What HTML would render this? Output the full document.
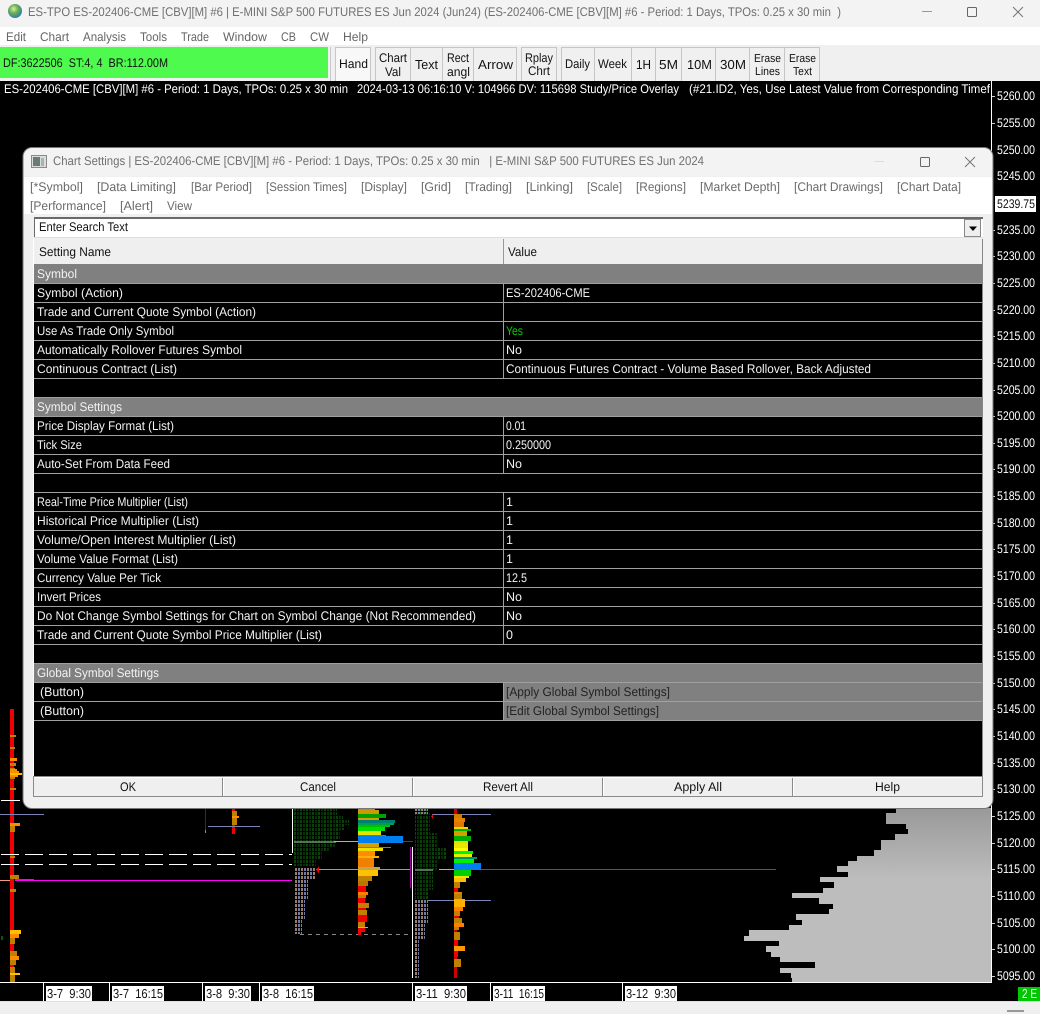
<!DOCTYPE html>
<html><head><meta charset="utf-8"><title>Chart Settings</title>
<style>
html,body{margin:0;padding:0;background:#000;width:1040px;height:1014px;overflow:hidden}
svg{display:block;position:absolute;left:0;top:0}
text{font-family:"Liberation Sans",sans-serif;font-size:12.5px;white-space:pre;text-rendering:geometricPrecision}
.c rect,.c line{shape-rendering:crispEdges}
.k{fill:#111}.w{fill:#f2f2f2}.g{fill:#707070}.t{fill:#6a6a6a}.d{fill:#222}.a{fill:#fff}
.dt text{font-size:13px}
</style></head><body>
<svg width="1040" height="1014" viewBox="0 0 1040 1014">
<defs>
<pattern id="pg" width="6" height="4" patternUnits="userSpaceOnUse" x="294" y="808"><rect x="0" y="0" width="2" height="3" fill="#0a420a"/><rect x="3" y="0" width="2" height="3" fill="#062e06"/></pattern>
<pattern id="pc" width="6" height="4" patternUnits="userSpaceOnUse" x="295" y="868"><rect x="0" y="0" width="2" height="3" fill="#9a7f68"/><rect x="3" y="0" width="2" height="3" fill="#7078a4"/></pattern>
<pattern id="pg2" width="6" height="4" patternUnits="userSpaceOnUse" x="414" y="808"><rect x="0" y="0" width="2" height="3" fill="#0a420a"/><rect x="3" y="0" width="2" height="3" fill="#062e06"/></pattern>
<pattern id="pc2" width="6" height="4" patternUnits="userSpaceOnUse" x="415" y="900"><rect x="0" y="0" width="2" height="3" fill="#9a7f68"/><rect x="3" y="0" width="2" height="3" fill="#7078a4"/></pattern>
<linearGradient id="gp" x1="0" y1="808" x2="0" y2="880" gradientUnits="userSpaceOnUse"><stop offset="0" stop-color="#999"/><stop offset="1" stop-color="#bdbdbd"/></linearGradient>
<radialGradient id="gl" cx=".4" cy=".35" r=".7"><stop offset="0" stop-color="#d4f0a0"/><stop offset=".45" stop-color="#6aae55"/><stop offset="1" stop-color="#2a78b0"/></radialGradient>
</defs>
<g class="c">
<rect width="1040" height="1014" fill="#000"/>
<rect width="1040" height="27" fill="#f3f3f3"/>
<rect y="27" width="1040" height="18" fill="#fff"/>
<rect y="45" width="1040" height="36" fill="#f0f0f0"/>
<rect x="0" y="47" width="328" height="31" fill="#4dfa4d"/>
<rect x="330" y="47" width="1" height="34" fill="#c8c8c8"/>
<g fill="#f0f0f0" stroke="#c6c6c6" stroke-width="1">
<rect x="335.500" y="47.500" width="35" height="34" fill="#f8f8f8"/>
<rect x="375.500" y="47.500" width="35" height="34"/><rect x="410.500" y="47.500" width="32" height="34"/>
<rect x="442.500" y="47.500" width="31" height="34"/><rect x="473.500" y="47.500" width="43" height="34"/>
<rect x="521.500" y="47.500" width="35" height="34"/><rect x="561.500" y="47.500" width="33" height="34"/>
<rect x="594.500" y="47.500" width="37" height="34"/><rect x="631.500" y="47.500" width="24" height="34"/>
<rect x="655.500" y="47.500" width="26" height="34"/><rect x="681.500" y="47.500" width="34" height="34"/>
<rect x="715.500" y="47.500" width="34" height="34"/><rect x="749.500" y="47.500" width="35" height="34"/>
<rect x="784.500" y="47.500" width="35" height="34"/>
</g>
<rect y="81" width="1040" height="1" fill="#000"/>
</g>
<circle cx="15" cy="11" r="7" fill="url(#gl)"/>
<g class="g"><text x="28" y="16" textLength="813" lengthAdjust="spacingAndGlyphs">ES-TPO ES-202406-CME [CBV][M] #6 | E-MINI S&amp;P 500 FUTURES ES Jun 2024 (Jun24) (ES-202406-CME [CBV][M] #6 - Period: 1 Days, TPOs: 0.25 x 30 min  )</text></g>
<g fill="none" stroke="#666"><path d="M922 11.500H932" stroke="#999"/><rect x="967.500" y="7.500" width="9" height="9" rx="1"/><path d="M1013 7L1023 17M1023 7L1013 17" stroke="#777"/></g>
<g class="t" style="fill:#666">
<text x="6" y="41" textLength="20" lengthAdjust="spacingAndGlyphs">Edit</text><text x="40" y="41" textLength="29" lengthAdjust="spacingAndGlyphs">Chart</text><text x="83" y="41" textLength="43" lengthAdjust="spacingAndGlyphs">Analysis</text><text x="140" y="41" textLength="27" lengthAdjust="spacingAndGlyphs">Tools</text><text x="181" y="41" textLength="28" lengthAdjust="spacingAndGlyphs">Trade</text><text x="223" y="41" textLength="44" lengthAdjust="spacingAndGlyphs">Window</text><text x="281" y="41" textLength="15" lengthAdjust="spacingAndGlyphs">CB</text><text x="310" y="41" textLength="19" lengthAdjust="spacingAndGlyphs">CW</text><text x="343" y="41" textLength="25" lengthAdjust="spacingAndGlyphs">Help</text>
</g>
<text class="k" x="3" y="67" textLength="165" lengthAdjust="spacingAndGlyphs">DF:3622506  ST:4, 4  BR:112.00M</text>
<g class="k">
<text x="339" y="68" textLength="29" lengthAdjust="spacingAndGlyphs">Hand</text>
<text x="379" y="62" textLength="28" lengthAdjust="spacingAndGlyphs">Chart</text><text x="385" y="76" textLength="16" lengthAdjust="spacingAndGlyphs">Val</text>
<text x="415" y="69" textLength="23" lengthAdjust="spacingAndGlyphs" style="font-size:13px">Text</text>
<text x="447" y="62" textLength="22" lengthAdjust="spacingAndGlyphs">Rect</text><text x="447" y="76" textLength="23" lengthAdjust="spacingAndGlyphs">angl</text>
<text x="478" y="69" textLength="35" lengthAdjust="spacingAndGlyphs" style="font-size:13px">Arrow</text>
<text x="525" y="62" textLength="28" lengthAdjust="spacingAndGlyphs">Rplay</text><text x="528" y="75" textLength="22" lengthAdjust="spacingAndGlyphs">Chrt</text>
<text x="565" y="68" textLength="25" lengthAdjust="spacingAndGlyphs">Daily</text><text x="598" y="68" textLength="29" lengthAdjust="spacingAndGlyphs">Week</text>
<text x="636" y="69" textLength="15" lengthAdjust="spacingAndGlyphs" style="font-size:13px">1H</text><text x="659" y="69" textLength="19" lengthAdjust="spacingAndGlyphs" style="font-size:13px">5M</text><text x="687" y="69" textLength="25" lengthAdjust="spacingAndGlyphs" style="font-size:13px">10M</text><text x="720" y="69" textLength="26" lengthAdjust="spacingAndGlyphs" style="font-size:13px">30M</text>
<text x="754" y="62" textLength="27" lengthAdjust="spacingAndGlyphs" style="font-size:11.500px">Erase</text><text x="755" y="75" textLength="25" lengthAdjust="spacingAndGlyphs" style="font-size:11.500px">Lines</text>
<text x="789" y="62" textLength="27" lengthAdjust="spacingAndGlyphs" style="font-size:11.500px">Erase</text><text x="793" y="75" textLength="19" lengthAdjust="spacingAndGlyphs" style="font-size:11.500px">Text</text>
</g>
<g class="a"><text x="4" y="93" textLength="344" lengthAdjust="spacingAndGlyphs">ES-202406-CME [CBV][M] #6 - Period: 1 Days, TPOs: 0.25 x 30 min</text><text x="357" y="93" textLength="322" lengthAdjust="spacingAndGlyphs">2024-03-13 06:16:10 V: 104966 DV: 115698 Study/Price Overlay</text><text x="689" y="93" textLength="301" lengthAdjust="spacingAndGlyphs">(#21.ID2, Yes, Use Latest Value from Corresponding Timef</text></g>

<g class="c">
<rect x="991" y="81" width="1" height="902" fill="#fff"/>
<g fill="#ccc"><rect x="992" y="96" width="3" height="1"/><rect x="992" y="123" width="3" height="1"/><rect x="992" y="230" width="3" height="1"/><rect x="992" y="256" width="3" height="1"/><rect x="992" y="283" width="3" height="1"/><rect x="992" y="310" width="3" height="1"/><rect x="992" y="336" width="3" height="1"/><rect x="992" y="363" width="3" height="1"/><rect x="992" y="390" width="3" height="1"/><rect x="992" y="416" width="3" height="1"/><rect x="992" y="443" width="3" height="1"/><rect x="992" y="469" width="3" height="1"/><rect x="992" y="496" width="3" height="1"/><rect x="992" y="523" width="3" height="1"/><rect x="992" y="549" width="3" height="1"/><rect x="992" y="576" width="3" height="1"/><rect x="992" y="603" width="3" height="1"/><rect x="992" y="629" width="3" height="1"/><rect x="992" y="656" width="3" height="1"/><rect x="992" y="683" width="3" height="1"/><rect x="992" y="709" width="3" height="1"/><rect x="992" y="736" width="3" height="1"/><rect x="992" y="763" width="3" height="1"/><rect x="992" y="789" width="3" height="1"/><rect x="992" y="816" width="3" height="1"/><rect x="992" y="843" width="3" height="1"/><rect x="992" y="869" width="3" height="1"/><rect x="992" y="896" width="3" height="1"/><rect x="992" y="923" width="3" height="1"/><rect x="992" y="949" width="3" height="1"/><rect x="992" y="976" width="3" height="1"/></g>
<rect x="995" y="196" width="41" height="16" fill="#fff"/>
</g>
<g class="a" transform="translate(0,-1)">
<text x="997" y="101" textLength="38" lengthAdjust="spacingAndGlyphs">5260.00</text><text x="997" y="128" textLength="38" lengthAdjust="spacingAndGlyphs">5255.00</text><text x="997" y="155" textLength="38" lengthAdjust="spacingAndGlyphs">5250.00</text><text x="997" y="181" textLength="38" lengthAdjust="spacingAndGlyphs">5245.00</text><text x="997" y="235" textLength="38" lengthAdjust="spacingAndGlyphs">5235.00</text><text x="997" y="261" textLength="38" lengthAdjust="spacingAndGlyphs">5230.00</text><text x="997" y="288" textLength="38" lengthAdjust="spacingAndGlyphs">5225.00</text><text x="997" y="315" textLength="38" lengthAdjust="spacingAndGlyphs">5220.00</text><text x="997" y="341" textLength="38" lengthAdjust="spacingAndGlyphs">5215.00</text><text x="997" y="368" textLength="38" lengthAdjust="spacingAndGlyphs">5210.00</text><text x="997" y="395" textLength="38" lengthAdjust="spacingAndGlyphs">5205.00</text><text x="997" y="421" textLength="38" lengthAdjust="spacingAndGlyphs">5200.00</text><text x="997" y="448" textLength="38" lengthAdjust="spacingAndGlyphs">5195.00</text><text x="997" y="474" textLength="38" lengthAdjust="spacingAndGlyphs">5190.00</text><text x="997" y="501" textLength="38" lengthAdjust="spacingAndGlyphs">5185.00</text><text x="997" y="528" textLength="38" lengthAdjust="spacingAndGlyphs">5180.00</text><text x="997" y="554" textLength="38" lengthAdjust="spacingAndGlyphs">5175.00</text><text x="997" y="581" textLength="38" lengthAdjust="spacingAndGlyphs">5170.00</text><text x="997" y="608" textLength="38" lengthAdjust="spacingAndGlyphs">5165.00</text><text x="997" y="634" textLength="38" lengthAdjust="spacingAndGlyphs">5160.00</text><text x="997" y="661" textLength="38" lengthAdjust="spacingAndGlyphs">5155.00</text><text x="997" y="688" textLength="38" lengthAdjust="spacingAndGlyphs">5150.00</text><text x="997" y="714" textLength="38" lengthAdjust="spacingAndGlyphs">5145.00</text><text x="997" y="741" textLength="38" lengthAdjust="spacingAndGlyphs">5140.00</text><text x="997" y="768" textLength="38" lengthAdjust="spacingAndGlyphs">5135.00</text><text x="997" y="794" textLength="38" lengthAdjust="spacingAndGlyphs">5130.00</text><text x="997" y="821" textLength="38" lengthAdjust="spacingAndGlyphs">5125.00</text><text x="997" y="848" textLength="38" lengthAdjust="spacingAndGlyphs">5120.00</text><text x="997" y="874" textLength="38" lengthAdjust="spacingAndGlyphs">5115.00</text><text x="997" y="901" textLength="38" lengthAdjust="spacingAndGlyphs">5110.00</text><text x="997" y="928" textLength="38" lengthAdjust="spacingAndGlyphs">5105.00</text><text x="997" y="954" textLength="38" lengthAdjust="spacingAndGlyphs">5100.00</text><text x="997" y="981" textLength="38" lengthAdjust="spacingAndGlyphs">5095.00</text>
</g>
<text class="k" x="997" y="208" textLength="38" lengthAdjust="spacingAndGlyphs">5239.75</text>

<g class="c">
<path fill="url(#gp)" d="M991 808H896V813H886V824H906V829H908V834H895V840H881V850H874V856H857V861H848V866H837V872H848V877H820V882H834V888H823V893H792V898H819V904H833V909H829V914H796V920H802V925H789V930H749V936H744V941H779V946H766V952H771V957H780V962H815V968H780V973H791V978H792V982H991Z"/>
<rect x="10" y="709" width="4" height="273" fill="#f00000"/>
<g fill="#c08000"><rect x="10" y="735" width="6" height="2"/><rect x="10" y="747" width="5" height="2"/><rect x="10" y="763" width="6" height="3"/><rect x="10" y="768" width="5" height="1"/><rect x="10" y="777" width="5" height="2"/><rect x="10" y="788" width="6" height="2"/><rect x="10" y="826" width="5" height="6"/><rect x="10" y="856" width="5" height="2"/><rect x="10" y="875" width="9" height="4"/><rect x="10" y="889" width="6" height="3"/><rect x="10" y="938" width="5" height="6"/><rect x="10" y="951" width="7" height="5"/><rect x="10" y="960" width="6" height="5"/><rect x="10" y="967" width="5" height="6"/><rect x="10" y="975" width="5" height="7"/></g>
<g fill="#ff8c00"><rect x="10" y="758" width="7" height="3"/><rect x="10" y="769" width="7" height="2"/><rect x="10" y="771" width="9" height="2"/><rect x="10" y="775" width="8" height="2"/><rect x="10" y="823" width="10" height="3"/><rect x="10" y="934" width="9" height="4"/><rect x="10" y="956" width="9" height="4"/></g>
<g fill="#ffc000"><rect x="10" y="773" width="12" height="2"/><rect x="10" y="930" width="11" height="4"/><rect x="10" y="973" width="10" height="2"/></g>
<rect x="1" y="800" width="19" height="1" fill="#fff"/>
<rect x="0" y="814" width="44" height="1" fill="#7c84b8"/>
<rect x="0" y="880" width="10" height="1" fill="#f09c84"/>
<rect x="15" y="879" width="19" height="1" fill="#3b5bff"/>
<rect x="15" y="880" width="277" height="1" fill="#ff00ff"/>
<rect x="1" y="936" width="2" height="4" fill="#0a5a0a"/>
<rect x="205" y="808" width="1" height="22" fill="#0a4a0a"/><rect x="205" y="830" width="1" height="3" fill="#8a88b4"/>
<rect x="232" y="808" width="3" height="26" fill="#f00000"/>
<rect x="232" y="811" width="5" height="14" fill="#c08000"/><rect x="232" y="816" width="7" height="2" fill="#ff9000"/>
<rect x="208" y="826" width="52" height="1" fill="#7c84b8"/>
<path d="M1 854.500H292M1 864.500H292" stroke="#fff" stroke-width="1" stroke-dasharray="18 6" fill="none"/>
<rect x="292" y="808" width="1" height="45" fill="#fff"/>
<path fill="url(#pg)" d="M294 808H337V815H343V820H349V825H345V830H340V840H336V848H330V852H322V860H316V866H294Z"/>
<rect x="294" y="841" width="42" height="2" fill="#7f8f80" opacity=".7"/>
<path fill="url(#pc)" d="M294 868H315V880H308V900H305V920H302V934H294Z"/>
<path d="M300 934.500H410" stroke="#888" stroke-dasharray="4 4" fill="none"/>
<rect x="334" y="841" width="24" height="1" fill="#f09c84"/>
<rect x="402" y="841" width="11" height="1" fill="#b000b0"/>
<rect x="316" y="869" width="95" height="1" fill="#8c98bc"/>
<path fill="#f00" d="M316 869.500L319 866.500V873.500Z"/>
<rect x="410" y="847" width="1" height="41" fill="#a000a0"/>
<rect x="412" y="847" width="1" height="131" fill="#fff"/>
<rect x="358" y="808" width="3" height="127" fill="#f00000"/>
<rect x="358" y="808" width="17" height="2" fill="#c8860a"/><rect x="358" y="810" width="21" height="4" fill="#cc9900"/><rect x="358" y="814" width="28" height="4" fill="#00a000"/><rect x="358" y="818" width="21" height="2" fill="#d4a000"/><rect x="358" y="820" width="37" height="3" fill="#008070"/><rect x="358" y="823" width="36" height="2" fill="#00a050"/><rect x="358" y="825" width="32" height="2" fill="#00c000"/><rect x="358" y="827" width="27" height="4" fill="#00e000"/><rect x="358" y="831" width="23" height="4" fill="#e4e400"/><rect x="358" y="835" width="28" height="1" fill="#00c000"/><rect x="358" y="836" width="45" height="7" fill="#0080f0"/><rect x="358" y="843" width="21" height="4" fill="#d4a000"/><rect x="358" y="847" width="33" height="1" fill="#00d000"/><rect x="358" y="848" width="25" height="3" fill="#f0e000"/><rect x="358" y="851" width="17" height="5" fill="#ff8c00"/><rect x="358" y="856" width="21" height="2" fill="#ffb000"/><rect x="358" y="858" width="16" height="9" fill="#f08000"/><rect x="358" y="867" width="22" height="3" fill="#c0a850"/><rect x="358" y="870" width="20" height="6" fill="#ffc000"/><rect x="358" y="876" width="14" height="5" fill="#c08000"/><rect x="358" y="881" width="10" height="5" fill="#b87800"/><rect x="358" y="886" width="8" height="6" fill="#f00000"/><rect x="358" y="892" width="10" height="3" fill="#ff8000"/><rect x="358" y="895" width="8" height="3" fill="#c08000"/><rect x="358" y="898" width="7" height="5" fill="#f00000"/><rect x="358" y="903" width="11" height="5" fill="#c08000"/><rect x="358" y="908" width="8" height="2" fill="#f00000"/><rect x="358" y="910" width="9" height="5" fill="#c08000"/><rect x="358" y="915" width="9" height="7" fill="#f00000"/><rect x="358" y="922" width="7" height="5" fill="#c08000"/><rect x="358" y="927" width="10" height="1" fill="#f0b000"/><rect x="358" y="928" width="7" height="4" fill="#f00000"/>
<path fill="url(#pg2)" d="M415 808H428V813H430V833H437V847H446V860H437V870H433V890H428V900H415Z"/>
<rect x="415" y="869" width="18" height="2" fill="#7f8f80" opacity=".7"/>
<path fill="url(#pc2)" d="M415 808H428V814H415ZM415 900H428V923H425V940H419V978H415Z"/>
<rect x="432" y="814" width="59" height="1" fill="#7c84b8"/>
<path fill="#f00" d="M431 816.500L433 814V819Z"/>
<rect x="427" y="900" width="64" height="1" fill="#7c84b8"/>
<rect x="439" y="869" width="15" height="1" fill="#f09c84"/>
<rect x="454" y="808" width="3" height="170" fill="#d00000"/>
<rect x="454" y="814" width="8" height="4" fill="#d08000"/><rect x="454" y="818" width="11" height="4" fill="#e88000"/><rect x="454" y="822" width="10" height="5" fill="#e07800"/><rect x="454" y="827" width="14" height="2" fill="#e8e000"/><rect x="454" y="829" width="17" height="2" fill="#00b000"/><rect x="454" y="831" width="13" height="5" fill="#d4a000"/><rect x="454" y="836" width="17" height="5" fill="#00b000"/><rect x="454" y="841" width="14" height="3" fill="#e4e400"/><rect x="454" y="844" width="14" height="4" fill="#e8e800"/><rect x="454" y="848" width="14" height="3" fill="#ffff00"/><rect x="454" y="851" width="19" height="3" fill="#00f000"/><rect x="454" y="854" width="18" height="3" fill="#e0f000"/><rect x="454" y="857" width="23" height="2" fill="#009070"/><rect x="454" y="859" width="20" height="4" fill="#00f000"/><rect x="454" y="863" width="27" height="7" fill="#0080f0"/><rect x="454" y="870" width="17" height="6" fill="#00d000"/><rect x="454" y="876" width="15" height="2" fill="#e8e800"/><rect x="454" y="878" width="12" height="4" fill="#ffc000"/><rect x="454" y="882" width="6" height="6" fill="#c08000"/><rect x="454" y="888" width="4" height="4" fill="#f00000"/><rect x="454" y="892" width="8" height="2" fill="#e88000"/><rect x="454" y="894" width="8" height="5" fill="#c08000"/><rect x="454" y="899" width="11" height="8" fill="#ffb000"/><rect x="454" y="907" width="9" height="4" fill="#ff8000"/><rect x="454" y="911" width="6" height="5" fill="#c08000"/><rect x="454" y="916" width="5" height="2" fill="#f00000"/><rect x="454" y="918" width="8" height="5" fill="#c08000"/><rect x="454" y="923" width="10" height="4" fill="#ff8000"/><rect x="454" y="927" width="5" height="3" fill="#c08000"/><rect x="454" y="932" width="6" height="8" fill="#c08000"/><rect x="454" y="940" width="4" height="6" fill="#f00000"/><rect x="454" y="946" width="11" height="5" fill="#ff9800"/><rect x="454" y="951" width="4" height="6" fill="#f00000"/><rect x="454" y="959" width="7" height="8" fill="#c08000"/>
<rect x="481" y="869" width="295" height="1" fill="#d000d0"/>
<rect x="0" y="982" width="992" height="1" fill="#fff"/>
<rect x="0" y="983" width="1040" height="19" fill="#000"/>
<g fill="#fff"><rect x="43" y="983" width="1" height="19"/><rect x="109" y="983" width="1" height="19"/><rect x="202" y="983" width="1" height="19"/><rect x="259" y="983" width="1" height="19"/><rect x="412" y="983" width="1" height="19"/><rect x="490" y="983" width="1" height="19"/><rect x="622" y="983" width="1" height="19"/>
<rect x="46" y="986" width="46" height="15"/><rect x="112" y="986" width="52" height="15"/><rect x="205" y="986" width="46" height="15"/><rect x="262" y="986" width="52" height="15"/><rect x="415" y="986" width="52" height="15"/><rect x="493" y="986" width="52" height="15"/><rect x="625" y="986" width="52" height="15"/></g>
<rect x="0" y="1001" width="1040" height="1" fill="#e0e0e0"/>
<rect x="0" y="1002" width="1040" height="12" fill="#f0f0f0"/>
<rect x="1007" y="1010" width="17" height="2" fill="#999"/>
<rect x="1018" y="987" width="22" height="14" fill="#00c800"/>
</g>
<g class="k dt"><text x="47" y="998" textLength="44" lengthAdjust="spacingAndGlyphs">3-7  9:30</text><text x="113" y="998" textLength="50" lengthAdjust="spacingAndGlyphs">3-7  16:15</text><text x="206" y="998" textLength="44" lengthAdjust="spacingAndGlyphs">3-8  9:30</text><text x="263" y="998" textLength="50" lengthAdjust="spacingAndGlyphs">3-8  16:15</text><text x="416" y="998" textLength="50" lengthAdjust="spacingAndGlyphs">3-11  9:30</text><text x="494" y="998" textLength="50" lengthAdjust="spacingAndGlyphs">3-11  16:15</text><text x="626" y="998" textLength="50" lengthAdjust="spacingAndGlyphs">3-12  9:30</text></g>
<text class="a" x="1022" y="998" textLength="15" lengthAdjust="spacingAndGlyphs" style="font-size:13px">2 E</text>

<rect x="23" y="147.500" width="970" height="661" rx="9" fill="#f0f0f0" stroke="#777" stroke-width="1"/>
<path d="M24 176V157a9 9 0 0 1 9-9H983a9 9 0 0 1 9 9V176Z" fill="#f3f3f3"/>
<g class="c">
<rect x="24" y="177" width="968" height="37" fill="#fff"/>
<rect x="34" y="217" width="949" height="20" fill="#fff"/>
<rect x="34" y="217" width="949" height="2" fill="#6a6a6a"/><rect x="34" y="217" width="1" height="20" fill="#6a6a6a"/><rect x="34" y="237" width="949" height="1" fill="#ddd"/>
<rect x="964.500" y="219.500" width="16" height="17" fill="#eee" stroke="#888"/>
<rect x="34" y="239" width="949" height="25" fill="#efefef"/>
<rect x="503" y="239" width="1" height="25" fill="#999"/>
<rect x="34" y="264" width="949" height="512" fill="#000"/>
<rect x="34" y="264" width="949" height="19" fill="#808080"/>
<rect x="34" y="397" width="949" height="19" fill="#808080"/>
<rect x="34" y="663" width="949" height="19" fill="#808080"/>
<rect x="504" y="682" width="479" height="38" fill="#808080"/>
<g fill="#a0a0a0"><rect x="34" y="283" width="949" height="1"/><rect x="34" y="302" width="949" height="1"/><rect x="34" y="321" width="949" height="1"/><rect x="34" y="340" width="949" height="1"/><rect x="34" y="359" width="949" height="1"/><rect x="34" y="378" width="949" height="1"/><rect x="34" y="397" width="949" height="1"/><rect x="34" y="416" width="949" height="1"/><rect x="34" y="435" width="949" height="1"/><rect x="34" y="454" width="949" height="1"/><rect x="34" y="473" width="949" height="1"/><rect x="34" y="492" width="949" height="1"/><rect x="34" y="511" width="949" height="1"/><rect x="34" y="530" width="949" height="1"/><rect x="34" y="549" width="949" height="1"/><rect x="34" y="568" width="949" height="1"/><rect x="34" y="587" width="949" height="1"/><rect x="34" y="606" width="949" height="1"/><rect x="34" y="625" width="949" height="1"/><rect x="34" y="644" width="949" height="1"/><rect x="34" y="663" width="949" height="1"/><rect x="34" y="682" width="949" height="1"/><rect x="34" y="701" width="949" height="1"/><rect x="34" y="720" width="949" height="1"/></g>
<g fill="#a0a0a0"><rect x="503" y="284" width="1" height="94"/><rect x="503" y="417" width="1" height="56"/><rect x="503" y="493" width="1" height="151"/><rect x="503" y="683" width="1" height="37"/></g>
<rect x="33" y="239" width="1" height="537" fill="#fff"/>
<rect x="982" y="239" width="1" height="537" fill="#888"/>
<g fill="#efefef" stroke="#8a8a8a"><rect x="33.500" y="776.500" width="189" height="20"/><rect x="222.500" y="776.500" width="190" height="20"/><rect x="412.500" y="776.500" width="190" height="20"/><rect x="602.500" y="776.500" width="190" height="20"/><rect x="792.500" y="776.500" width="190" height="20"/></g>
<g fill="#fff"><rect x="34" y="777" width="948" height="1"/><rect x="223" y="777" width="1" height="19"/><rect x="413" y="777" width="1" height="19"/><rect x="603" y="777" width="1" height="19"/><rect x="793" y="777" width="1" height="19"/></g>
</g>
<path d="M969 226.500H977L973 231Z" fill="#000"/>
<rect x="31.500" y="155.500" width="15" height="12" fill="#dcdcdc" stroke="#8a8a8a"/>
<rect x="33" y="157" width="7" height="9" fill="#6b7c78"/><rect x="41" y="158" width="3" height="8" fill="#a9b4b0"/>
<g fill="none"><path d="M874 161.500H884" stroke="#ddd"/><rect x="920.500" y="157.500" width="9" height="9" rx="1" stroke="#666"/><path d="M965 157L975 167M975 157L965 167" stroke="#777"/></g>
<text class="g" x="53" y="165" textLength="651" lengthAdjust="spacingAndGlyphs">Chart Settings | ES-202406-CME [CBV][M] #6 - Period: 1 Days, TPOs: 0.25 x 30 min   | E-MINI S&amp;P 500 FUTURES ES Jun 2024</text>
<g class="t">
<text x="30" y="191" textLength="53" lengthAdjust="spacingAndGlyphs">[*Symbol]</text><text x="97" y="191" textLength="79" lengthAdjust="spacingAndGlyphs">[Data Limiting]</text><text x="191" y="191" textLength="61" lengthAdjust="spacingAndGlyphs">[Bar Period]</text><text x="266" y="191" textLength="81" lengthAdjust="spacingAndGlyphs">[Session Times]</text><text x="361" y="191" textLength="46" lengthAdjust="spacingAndGlyphs">[Display]</text><text x="421" y="191" textLength="30" lengthAdjust="spacingAndGlyphs">[Grid]</text><text x="465" y="191" textLength="47" lengthAdjust="spacingAndGlyphs">[Trading]</text><text x="526" y="191" textLength="47" lengthAdjust="spacingAndGlyphs">[Linking]</text><text x="587" y="191" textLength="35" lengthAdjust="spacingAndGlyphs">[Scale]</text><text x="636" y="191" textLength="50" lengthAdjust="spacingAndGlyphs">[Regions]</text><text x="700" y="191" textLength="80" lengthAdjust="spacingAndGlyphs">[Market Depth]</text><text x="794" y="191" textLength="89" lengthAdjust="spacingAndGlyphs">[Chart Drawings]</text><text x="897" y="191" textLength="64" lengthAdjust="spacingAndGlyphs">[Chart Data]</text>
<text x="30" y="210" textLength="76" lengthAdjust="spacingAndGlyphs">[Performance]</text><text x="120" y="210" textLength="33" lengthAdjust="spacingAndGlyphs">[Alert]</text><text x="167" y="210" textLength="25" lengthAdjust="spacingAndGlyphs">View</text>
</g>
<g class="k">
<text x="39" y="231" textLength="89" lengthAdjust="spacingAndGlyphs">Enter Search Text</text>
<text x="39" y="256" textLength="72" lengthAdjust="spacingAndGlyphs">Setting Name</text>
<text x="508" y="256" textLength="29" lengthAdjust="spacingAndGlyphs">Value</text>
</g>
<g class="w">
<text x="37" y="278" textLength="40" lengthAdjust="spacingAndGlyphs">Symbol</text>
<text x="37" y="297" textLength="86" lengthAdjust="spacingAndGlyphs">Symbol (Action)</text>
<text x="37" y="316" textLength="219" lengthAdjust="spacingAndGlyphs">Trade and Current Quote Symbol (Action)</text>
<text x="37" y="335" textLength="137" lengthAdjust="spacingAndGlyphs">Use As Trade Only Symbol</text>
<text x="37" y="354" textLength="205" lengthAdjust="spacingAndGlyphs">Automatically Rollover Futures Symbol</text>
<text x="37" y="373" textLength="140" lengthAdjust="spacingAndGlyphs">Continuous Contract (List)</text>
<text x="37" y="411" textLength="85" lengthAdjust="spacingAndGlyphs">Symbol Settings</text>
<text x="37" y="430" textLength="137" lengthAdjust="spacingAndGlyphs">Price Display Format (List)</text>
<text x="37" y="449" textLength="45" lengthAdjust="spacingAndGlyphs">Tick Size</text>
<text x="37" y="468" textLength="133" lengthAdjust="spacingAndGlyphs">Auto-Set From Data Feed</text>
<text x="37" y="506" textLength="151" lengthAdjust="spacingAndGlyphs">Real-Time Price Multiplier (List)</text>
<text x="37" y="525" textLength="162" lengthAdjust="spacingAndGlyphs">Historical Price Multiplier (List)</text>
<text x="37" y="544" textLength="199" lengthAdjust="spacingAndGlyphs">Volume/Open Interest Multiplier (List)</text>
<text x="37" y="563" textLength="141" lengthAdjust="spacingAndGlyphs">Volume Value Format (List)</text>
<text x="37" y="582" textLength="124" lengthAdjust="spacingAndGlyphs">Currency Value Per Tick</text>
<text x="37" y="601" textLength="64" lengthAdjust="spacingAndGlyphs">Invert Prices</text>
<text x="37" y="620" textLength="439" lengthAdjust="spacingAndGlyphs">Do Not Change Symbol Settings for Chart on Symbol Change (Not Recommended)</text>
<text x="37" y="639" textLength="285" lengthAdjust="spacingAndGlyphs">Trade and Current Quote Symbol Price Multiplier (List)</text>
<text x="37" y="677" textLength="122" lengthAdjust="spacingAndGlyphs">Global Symbol Settings</text>
<text x="40" y="696" textLength="44" lengthAdjust="spacingAndGlyphs">(Button)</text>
<text x="40" y="715" textLength="44" lengthAdjust="spacingAndGlyphs">(Button)</text>
<text x="506" y="297" textLength="84" lengthAdjust="spacingAndGlyphs">ES-202406-CME</text>
<text x="506" y="354" textLength="16" lengthAdjust="spacingAndGlyphs">No</text>
<text x="506" y="373" textLength="365" lengthAdjust="spacingAndGlyphs">Continuous Futures Contract - Volume Based Rollover, Back Adjusted</text>
<text x="506" y="430" textLength="20" lengthAdjust="spacingAndGlyphs">0.01</text>
<text x="506" y="449" textLength="45" lengthAdjust="spacingAndGlyphs">0.250000</text>
<text x="506" y="468" textLength="16" lengthAdjust="spacingAndGlyphs">No</text>
<text x="506" y="506">1</text><text x="506" y="525">1</text><text x="506" y="544">1</text><text x="506" y="563">1</text>
<text x="506" y="582" textLength="21" lengthAdjust="spacingAndGlyphs">12.5</text>
<text x="506" y="601" textLength="16" lengthAdjust="spacingAndGlyphs">No</text>
<text x="506" y="620" textLength="16" lengthAdjust="spacingAndGlyphs">No</text>
<text x="506" y="639">0</text>
</g>
<text x="506" y="335" textLength="17" lengthAdjust="spacingAndGlyphs" fill="#00d000">Yes</text>
<g class="d">
<text x="506" y="696" textLength="164" lengthAdjust="spacingAndGlyphs">[Apply Global Symbol Settings]</text>
<text x="506" y="715" textLength="153" lengthAdjust="spacingAndGlyphs">[Edit Global Symbol Settings]</text>
</g>
<g class="k">
<text x="120" y="791" textLength="16" lengthAdjust="spacingAndGlyphs">OK</text>
<text x="300" y="791" textLength="36" lengthAdjust="spacingAndGlyphs">Cancel</text>
<text x="483" y="791" textLength="50" lengthAdjust="spacingAndGlyphs">Revert All</text>
<text x="674" y="791" textLength="48" lengthAdjust="spacingAndGlyphs">Apply All</text>
<text x="875" y="791" textLength="25" lengthAdjust="spacingAndGlyphs">Help</text>
</g>
</svg>
</body></html>
